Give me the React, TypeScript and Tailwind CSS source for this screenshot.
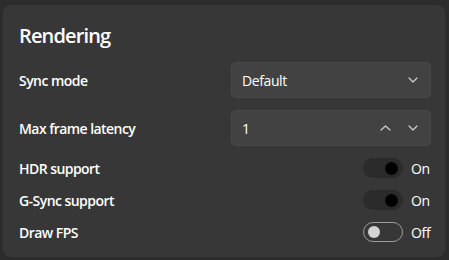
import React from "react";

const font = { fontFamily: '"Segoe UI", "Open Sans", "Noto Sans", sans-serif' };

function ChevronDown() {
  return (
    <svg width="10" height="6" viewBox="0 0 10 6" fill="none">
      <path d="M1 1 L5 5 L9 1" stroke="#cfcfcf" strokeWidth="1.2" strokeLinecap="round" strokeLinejoin="round" />
    </svg>
  );
}
function ChevronUp() {
  return (
    <svg width="11" height="6" viewBox="0 0 11 6" fill="none">
      <path d="M1 5 L5.5 1 L10 5" stroke="#cfcfcf" strokeWidth="1.2" strokeLinecap="round" strokeLinejoin="round" />
    </svg>
  );
}

function Toggle({ on }: { on: boolean }) {
  return (
    <div className="flex items-center gap-2">
      {on ? (
        <div className="w-[40px] h-[20px] rounded-full bg-[#2b2b2b] flex items-center justify-end pr-[5px]">
          <div className="w-[13px] h-[13px] rounded-full bg-black" />
        </div>
      ) : (
        <div className="w-[40px] h-[20px] rounded-full border border-[#9b9b9b] flex items-center pl-[4px]">
          <div className="w-[12px] h-[12px] rounded-full bg-[#d4d4d4]" />
        </div>
      )}
      <span className="text-[14px] text-white w-[20px] tracking-[-0.3px]">{on ? "On" : "Off"}</span>
    </div>
  );
}

const label = "text-[14px] font-semibold text-white tracking-[-0.55px]";

export default function App() {
  return (
    <div className="w-[449px] h-[260px] bg-[#2c2c2c] pl-[3px] pt-[5px]" style={font}>
      <div className="w-[442px] h-[252px] bg-[#373737] rounded-[8px] pt-[17px] pl-[16px] pr-[14px] flex flex-col gap-3">
        <div className="text-[20px] leading-[28px] font-semibold text-white tracking-[-0.85px]">Rendering</div>
        <div className="flex items-center justify-between h-[36px]">
          <span className={label}>Sync mode</span>
          <div className="w-[200px] h-[36px] rounded-[5px] bg-[#424242] border border-[#474747] flex items-center justify-between pl-[10px] pr-[12px]">
            <span className="text-[14px] text-white tracking-[-0.4px]">Default</span>
            <ChevronDown />
          </div>
        </div>
        <div className="flex items-center justify-between h-[36px]">
          <span className={label}>Max frame latency</span>
          <div className="w-[200px] h-[36px] rounded-[5px] bg-[#424242] border border-[#474747] flex items-center pl-[10px] pr-[12px]">
            <span className="text-[14px] text-white flex-1">1</span>
            <div className="flex items-center gap-[17px]">
              <ChevronUp />
              <ChevronDown />
            </div>
          </div>
        </div>
        <div className="flex items-center justify-between h-[20px]">
          <span className={label}>HDR support</span>
          <Toggle on />
        </div>
        <div className="flex items-center justify-between h-[20px]">
          <span className={label}>G-Sync support</span>
          <Toggle on />
        </div>
        <div className="flex items-center justify-between h-[20px]">
          <span className={label}>Draw FPS</span>
          <Toggle on={false} />
        </div>
      </div>
    </div>
  );
}
